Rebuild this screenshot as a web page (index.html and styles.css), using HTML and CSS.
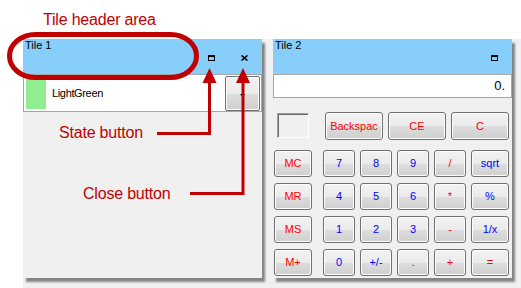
FILE: index.html
```html
<!DOCTYPE html>
<html>
<head>
<meta charset="utf-8">
<link rel="stylesheet" href="styles.css">
</head>
<body>
<div class="stage">
  <div class="tiles">
    <section class="tile">
      <header class="tile-head">
        <span class="tile-title">Tile 1</span>
        <button class="head-btn"><span class="ico-state"></span></button>
        <button class="head-btn"><svg class="ico-close" width="7" height="6" viewBox="0 0 7 6"><path d="M0.5 0.5 L6.5 5.5 M6.5 0.5 L0.5 5.5" stroke="#000" stroke-width="1.6" fill="none"/></svg></button>
      </header>
      <div class="combo">
        <span class="swatch"></span>
        <span class="combo-text">LightGreen</span>
        <span class="combo-drop"><svg width="5" height="3" viewBox="0 0 5 3"><path d="M0 0 H5 L2.5 3 Z" fill="#000"/></svg></span>
      </div>
    </section>
    <section class="tile">
      <header class="tile-head">
        <span class="tile-title">Tile 2</span>
        <button class="head-btn"><span class="ico-state"></span></button>
      </header>
      <div class="display">0.</div>
      <div class="mem-row">
        <span class="mem-box"></span>
        <button class="cbtn red wide first">Backspac</button>
        <button class="cbtn red wide">CE</button>
        <button class="cbtn red wide">C</button>
      </div>
      <div class="keypad">
        <button class="cbtn red mem">MC</button>
        <button class="cbtn blue">7</button>
        <button class="cbtn blue">8</button>
        <button class="cbtn blue">9</button>
        <button class="cbtn red">/</button>
        <button class="cbtn blue">sqrt</button>
        <button class="cbtn red mem">MR</button>
        <button class="cbtn blue">4</button>
        <button class="cbtn blue">5</button>
        <button class="cbtn blue">6</button>
        <button class="cbtn red">*</button>
        <button class="cbtn blue">%</button>
        <button class="cbtn red mem">MS</button>
        <button class="cbtn blue">1</button>
        <button class="cbtn blue">2</button>
        <button class="cbtn blue">3</button>
        <button class="cbtn red">-</button>
        <button class="cbtn blue">1/x</button>
        <button class="cbtn red mem">M+</button>
        <button class="cbtn blue">0</button>
        <button class="cbtn blue">+/-</button>
        <button class="cbtn blue">.</button>
        <button class="cbtn red">+</button>
        <button class="cbtn red">=</button>
      </div>
    </section>
  </div>
</div>

<div class="note note-header">Tile header area</div>
<div class="note note-state">State button</div>
<div class="note note-close">Close button</div>
<svg class="marks" width="521" height="288" viewBox="0 0 521 288">
  <rect x="9.5" y="34.5" width="187" height="43" rx="26" ry="21.5" fill="none" stroke="#c00000" stroke-width="5"/>
  <polyline points="157,133.5 209.5,133.5 209.5,82" fill="none" stroke="#c00000" stroke-width="3"/>
  <polygon points="202.5,83 216.5,83 209.5,68" fill="#c00000"/>
  <polyline points="190,193.5 243,193.5 243,82" fill="none" stroke="#c00000" stroke-width="3"/>
  <polygon points="236,83 250,83 243,68" fill="#c00000"/>
</svg>
</body>
</html>
```
FILE: styles.css
```css
* { box-sizing: border-box; }
html, body {
  margin: 0;
  padding: 0;
  background: #ffffff;
  font-family: "Liberation Sans", Arial, sans-serif;
  overflow: hidden;
}
body {
  position: relative;
  width: 521px;
  height: 288px;
}
.stage {
  padding: 39px 0 0 23px;
}
.tiles {
  display: flex;
  align-items: flex-start;
  gap: 11px;
  height: 249px;
  background: #f0f0f0;
}
.tile {
  width: 239px;
  height: 239px;
  background: #f0f0f0;
  box-shadow: 3px 4px 2px rgba(0, 0, 0, 0.45);
  display: flex;
  flex-direction: column;
}
.tile-head {
  height: 35px;
  background: #87cefa;
  display: flex;
  align-items: flex-start;
  padding-right: 2px;
  flex-shrink: 0;
}
.tile-title {
  flex: 1;
  font-size: 11px;
  line-height: 13px;
  color: #000;
  padding-left: 2px;
}
.head-btn {
  width: 33px;
  height: 33px;
  padding: 0;
  margin: 0;
  border: none;
  background: transparent;
  display: flex;
  align-items: center;
  justify-content: center;
}
.ico-state {
  display: block;
  width: 7px;
  height: 6px;
  border: 1px solid #000;
  border-top-width: 2px;
  margin-top: 5px;
  margin-left: 1px;
}
.ico-close {
  display: block;
  margin-top: 4px;
  margin-left: 1px;
}
.combo {
  height: 38px;
  background: #fff;
  border: 1px solid #a6a6a6;
  display: flex;
  align-items: center;
  padding: 0 1px 0 2px;
}
.swatch {
  width: 20px;
  height: 31px;
  background: #90ee90;
}
.combo-text {
  margin-left: 6px;
  font-size: 11px;
  letter-spacing: -0.35px;
  color: #000;
}
.combo-drop {
  margin-left: auto;
  align-self: flex-start;
  margin-top: 1px;
  width: 35px;
  height: 35px;
  border: 1px solid #707070;
  border-radius: 2px;
  box-shadow: inset 0 0 0 1px #fcfcfc;
  background: linear-gradient(to bottom, #f2f2f2 0%, #ebebeb 50%, #dddddd 51%, #cfcfcf 100%);
  display: flex;
  align-items: center;
  justify-content: center;
}
.combo-drop svg { display: block; margin-top: 3px; }
.display {
  height: 24px;
  background: #fff;
  border: 1px solid #a6a6a6;
  text-align: right;
  padding-right: 6px;
  font-size: 13px;
  line-height: 22px;
  color: #000;
}
.mem-row {
  display: flex;
  align-items: flex-start;
  gap: 5px;
  margin-top: 14px;
  padding-left: 4px;
  height: 28px;
}
.mem-box {
  width: 32px;
  height: 25px;
  margin-top: 1px;
  border: 1px solid;
  border-color: #a0a0a0 #ffffff #ffffff #a0a0a0;
  box-shadow: inset 1px 1px 0 #696969;
  background: #f0f0f0;
}
.cbtn {
  margin: 0;
  padding: 0;
  height: 27px;
  border: 1px solid #707070;
  border-radius: 3px;
  box-shadow: inset 0 0 0 1px #fcfcfc;
  background: linear-gradient(to bottom, #f2f2f2 0%, #ebebeb 50%, #dddddd 51%, #cfcfcf 100%);
  font-family: "Liberation Sans", Arial, sans-serif;
  font-size: 11px;
  line-height: 1;
  white-space: nowrap;
  overflow: hidden;
}
.cbtn.red { color: #ff0000; }
.cbtn.blue { color: #0000ff; }
.cbtn.wide { width: 58px; height: 28px; }
.cbtn.first { margin-left: 11px; }
.keypad {
  display: grid;
  grid-template-columns: 44px repeat(4, 32px) 38px;
  grid-auto-rows: 27px;
  column-gap: 5px;
  row-gap: 6px;
  margin-top: 10px;
  margin-left: 1px;
}
.keypad .mem { width: 38px; }

.note {
  position: absolute;
  font-family: "Liberation Sans", Arial, sans-serif;
  font-size: 16px;
  line-height: 18px;
  letter-spacing: -0.2px;
  color: #c00000;
  white-space: nowrap;
}
.note-header { left: 43px; top: 11px; }
.note-state { left: 59px; top: 124px; }
.note-close { left: 83px; top: 185px; }
.marks {
  position: absolute;
  left: 0;
  top: 0;
  pointer-events: none;
}
```
